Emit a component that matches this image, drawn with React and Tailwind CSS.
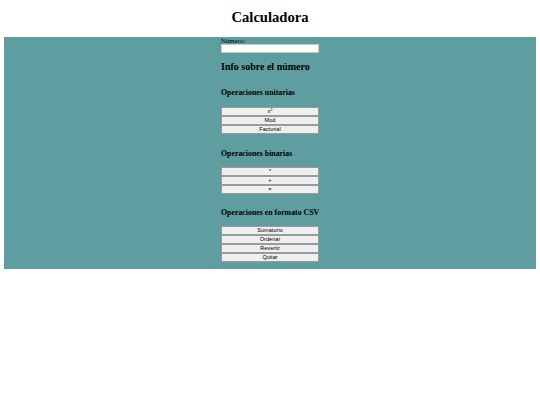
import React from 'react';

const serif = { fontFamily: '"Liberation Serif", "Times New Roman", serif' };

function OpButton({ children }) {
  return (
    <button className="h-[9px] w-full border border-[#9a9a9a] bg-[#efefef] text-[5.6px] leading-[7px] text-black font-['Liberation_Sans',Arial,sans-serif] flex items-center justify-center">
      {children}
    </button>
  );
}

function Section({ title, mt, gap, items }) {
  return (
    <>
      <h3 className={`${mt} h-[10px] whitespace-nowrap text-[7.85px] leading-[10px] font-bold text-black`}>{title}</h3>
      <div className={`${gap} flex flex-col`}>
        {items.map((it, i) => (
          <OpButton key={i}>{it}</OpButton>
        ))}
      </div>
    </>
  );
}

export default function App() {
  return (
    <div className="min-h-[405px] bg-white px-[4px] text-black" style={serif}>
      <h1 className="pt-[9px] h-[26px] text-center text-[14.6px] leading-[17px] font-bold">Calculadora</h1>
      <div className="mt-[11px] bg-[#5f9ea0] pb-[7px] flex justify-center">
        <div className="w-[98px] flex flex-col">
          <label className="h-[7px] whitespace-nowrap text-[6.8px] leading-[8px]">Número:</label>
          <input className="h-[9px] w-full bg-white border border-[#c8c8c8] outline-none" />
          <h2 className="mt-[8px] h-[12px] whitespace-nowrap text-[10px] leading-[12px] font-bold">Info sobre el número</h2>
          <Section
            title="Operaciones unitarias"
            mt="mt-[15px]"
            gap="mt-[9px]"
            items={[<span key="x">x<sup className="text-[4px]">2</sup></span>, 'Mod', 'Factorial']}
          />
          <Section title="Operaciones binarias" mt="mt-[15px]" gap="mt-[8px]" items={['*', '+', '=']} />
          <Section
            title="Operaciones en formato CSV"
            mt="mt-[14px]"
            gap="mt-[8px]"
            items={['Sumatorio', 'Ordenar', 'Revertir', 'Quitar']}
          />
        </div>
      </div>
    </div>
  );
}
